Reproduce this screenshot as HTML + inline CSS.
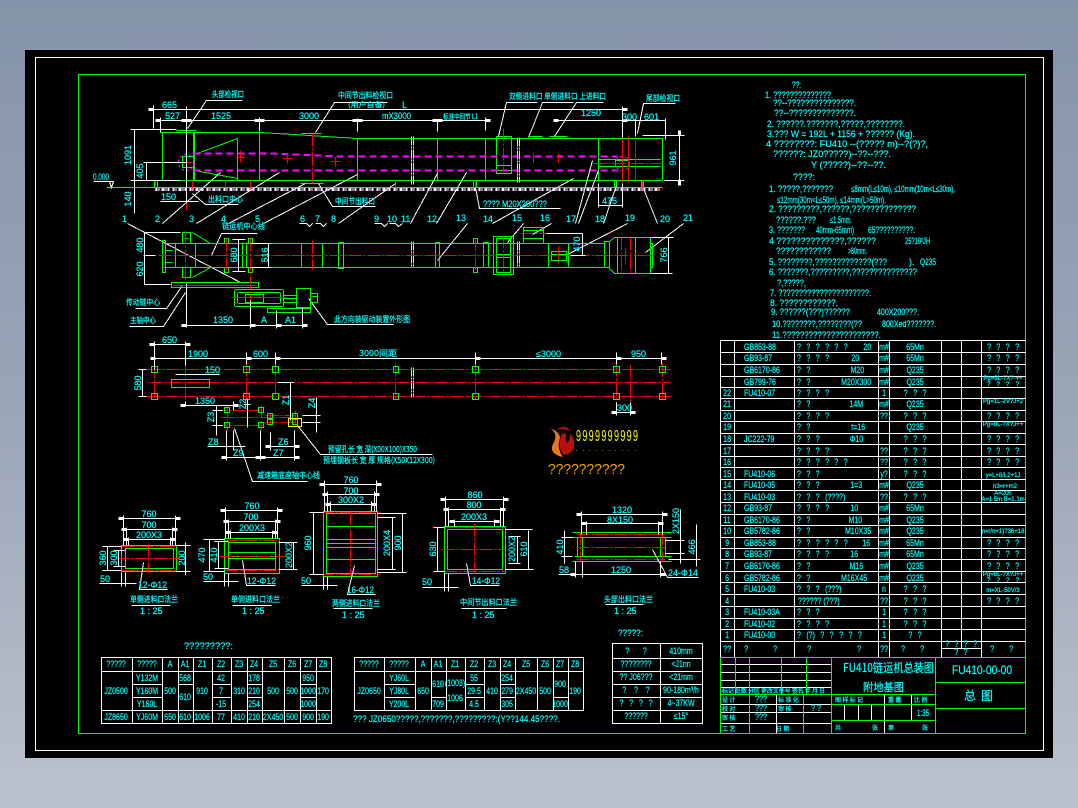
<!DOCTYPE html>
<html lang="zh"><head><meta charset="utf-8"><title>FU410</title>
<style>
html,body{margin:0;padding:0;width:1078px;height:808px;overflow:hidden;background:linear-gradient(180deg,#8593aa 0%,#9aa5b7 50%,#bcc2cd 100%)}
svg{position:absolute;left:0;top:0;display:block}
.w{stroke:#fff;fill:none}.g{stroke:#0f0;fill:none}.r{stroke:#f00;fill:none;stroke-dasharray:13 2 2 2}.rs{stroke:#f00;fill:none}
.m{stroke:#f0f;fill:none;stroke-width:2;stroke-dasharray:7 4}.y{stroke:#ff0;fill:none;stroke-dasharray:9 1 2 1}
text{font-family:"Liberation Sans","Noto Sans CJK SC",sans-serif;font-size:9px;fill:#0ff;stroke:#0ff;stroke-width:.2}
.s{font-size:7.5px}.xs{font-size:6px}.q{word-spacing:4.5px}
.z{font-family:"Noto Sans CJK SC","Liberation Sans",sans-serif;font-size:8px}
.nl>text{transform-box:fill-box;transform-origin:left center;transform:scaleX(.78)}
.nc>text{transform-box:fill-box;transform-origin:center;transform:scaleX(.78)}
.nr>text{transform-box:fill-box;transform-origin:right center;transform:scaleX(.78)}
.nc>text.xs{transform:none}
.k{stroke:none}
</style></head><body>
<svg width="1078" height="808" viewBox="0 0 1078 808" xmlns="http://www.w3.org/2000/svg">
<defs><marker id="t" viewBox="0 0 5 3" refX="0" refY="1.5" markerUnits="userSpaceOnUse" markerWidth="5" markerHeight="3" orient="auto-start-reverse"><rect width="5" height="3" fill="#fff"/></marker></defs>
<rect x="25" y="50" width="1028" height="708" fill="#000"/>
<g shape-rendering="crispEdges" transform="translate(.5 .5)">
<rect class="w" x="35" y="57" width="1008" height="693"/>
<rect class="g" x="78" y="74" width="947" height="659"/>

<!-- elevation -->
<path class="g" d="M106 187H662M160 180H662M160 132H260L357 138H662M162 132V180M193 132V180M194 132V180M237 138V180M259 132V180M357 138V180M437 138V180M485 138V180M598 138V180M662 138V180M194 154L237 138M194 170L237 178M176 130H196M301 133H321M300 183H323M528 136H542M549 136H567M496 136H511V173H496ZM496 165H511M496 170H511M598 159H660M598 166H660M154 180V187M157 180V187M473 180V187M476 180V187M614 180V187M616 180V187M641 180V187M643 180V187M182 156H193V167H182ZM615 160H628V166H615Z"/>
<path class="m" d="M193 153H270L340 156H617M193 170H617"/>
<circle class="m" style="stroke-width:1;stroke-dasharray:3 2" cx="186" cy="162" r="8"/>
<circle class="m" style="stroke-width:1;stroke-dasharray:3 2" cx="622" cy="163" r="7"/>
<path class="rs" d="M186 158V172M180 162H192M240 150V162M235 157H245M287 153V163M282 158H292M335 156V166M330 161H340M533 153V162M558 153V162M622 138V182M628 136V182M635 140V182M155 180V190M192 180V190M225 180V190M250 180V190M395 180V190M475 180V190M642 180V190"/>
<path class="r" d="M312 133V183M503 128V170M186 165V210M593 163H665"/>
<path class="y" d="M411 136V185M413 136V185M517 137V182M519 137V182M411 241V267M413 241V267M517 241V267M519 241V267M411 367V397M413 367V397"/>
<path d="M155 189H660" stroke="#fff" stroke-width="3" stroke-dasharray="2 1 1 2 3 1 1 1 2 3" fill="none"/>

<!-- elevation dims -->
<path class="w" marker-start="url(#t)" marker-end="url(#t)" d="M153 109H622"/>
<path class="w" marker-start="url(#t)" marker-end="url(#t)" d="M160 120H186"/>
<path class="w" marker-start="url(#t)" marker-end="url(#t)" d="M186 120H259"/>
<path class="w" marker-start="url(#t)" marker-end="url(#t)" d="M259 120H357"/>
<path class="w" marker-start="url(#t)" marker-end="url(#t)" d="M357 120H437"/>
<path class="w" marker-start="url(#t)" marker-end="url(#t)" d="M437 120H485"/>
<path class="w" marker-start="url(#t)" marker-end="url(#t)" d="M558 120H622"/>
<path class="w" d="M622 120H665M153 105V128M186 106V202M160 117V132M259 117V131M357 118V131M437 120V131M485 117V130M622 106V137M622 183V207M635 118V136M665 118V139M642 135H684M664 180H684M130 129H176M130 180H180M143 162H185M134 129V213M146 162V180M93 181H113M109 181L111 187L113 181M598 183V207M598 205H622M160 201H198M238 204H205L192 193M187 128L206 100H242M315 132L334 102H387M318 183L332 206H375M127 223L240 282M162 223L220 172M196 223L279 172M228 223L305 183M263 223L357 174M299 223H306L309 226L312 223M315 223H320L323 226L326 223M338 223L395 183M374 223H381L384 226L387 223M389 223H395L398 226L402 223M410 223L437 173M436 223L466 172M467 223L437 260M492 223L573 178M523 223L507 242M551 223L532 234M575 223L592 160M578 223L598 170M603 223L616 185M627 223L567 254M657 223L643 188M683 223L645 252M498 136L506 102H537M528 137L542 102H573M554 136L576 102H603M637 133L643 103H675M475 187L479 208H560M211 255L221 233H257M135 308H166L182 285M129 326H163L185 292M308 298L327 324H393"/>
<path class="w" marker-start="url(#t)" marker-end="url(#t)" d="M679 135V180"/>

<!-- plan -->
<path class="g" d="M164 243H605M164 267H605M162 240H165V272H162ZM165 250H172M165 262H172M175 243V267M195 243V267M242 242V267M246 242V267M301 243V267M322 243V267M338 242H343V268H338ZM435 242H439V267H435ZM483 242H488V267H483ZM182 232H190V243H182ZM182 267H190V277H182ZM184 238H188M192 232L210 243M192 277L210 267M171 282H258V287H171ZM224 238H228V243H224ZM224 267H228V272H224ZM248 238H252V243H248ZM248 267H252V272H248ZM473 238H477V243H473ZM473 267H477V272H473ZM493 236H513V274H493ZM496 238H510V272H496ZM496 254H510M496 257H510M523 227H543V243H523ZM523 230H543M523 238H543M548 243H568V267H548ZM551 251H566V260H551ZM551 254H566M604 241H609V267H604ZM609 241L614 237H650V273H614L609 268M617 237V273M635 237V273M650 243H652V267H650"/>
<rect class="g" x="234" y="289" width="49" height="17" rx="2"/><rect class="g" x="237" y="292" width="43" height="11" rx="2"/><rect class="g" x="245" y="294" width="18" height="8"/>
<path class="g" d="M283 295H297M283 298H297M283 302H297M267 308H310V312H267ZM296 288H310V307H296ZM310 293H317V302H310ZM312 296H317"/>
<path class="r" d="M158 255H652M185 230V280M226 238V272M250 238V300M312 240V269M475 238V272M503 235V276M558 246V264M621 237V273M630 237V273M625 247V265M520 233H546"/>
<path class="rs" d="M173 285H256M232 297H285"/>
<path class="w" d="M144 232V284M144 232H180M143 255H155M144 284H170M250 243H270M250 267H270M238 239V271M232 239H245M232 271H245M268 243V267M186 283V327M250 300V328M276 310V328M302 307V328M546 233H582M570 255H585M582 233V255M650 237H673M650 273H672M668 237V273"/>
<path class="w" marker-start="url(#t)" marker-end="url(#t)" d="M186 325H250"/><path class="w" marker-end="url(#t)" d="M250 325H276"/><path class="w" marker-end="url(#t)" d="M276 325H302"/>

<!-- foundation -->
<path class="r" d="M147 369H670M149 382H670M146 396H671M154 365V400M185 363V403M246 363V400M275 363V400M395 363V400M475 363V400M616 363V402M630 365V402M662 363V400M214 410H262M214 425H262M221 417H290M265 415H295M265 422H295M227 405V430M261 405V430M270 412V426M295 410V430"/>
<path class="g" d="M151 366h6v6h-6zM151 393h6v6h-6zM243 366h6v6h-6zM243 393h6v6h-6zM272 366h6v6h-6zM272 393h6v6h-6zM393 366h5v6h-5zM393 393h5v6h-5zM472 366h6v6h-6zM472 393h6v6h-6zM613 366h6v6h-6zM613 393h6v6h-6zM659 366h6v6h-6zM659 393h6v6h-6zM171 379H209V387H171ZM224 407h5v5h-5zM224 422h5v5h-5zM258 407h5v5h-5zM258 422h5v5h-5zM267 413h5v5h-5zM267 419h5v5h-5zM292 413h5v5h-5zM292 419h5v5h-5z"/>
<rect x="288" y="418" width="13" height="8" fill="none" stroke="#ff0"/>
<path class="w" d="M154 341V369M185 341V365M175 374H219M142 369V396M138 369H146M138 396H146M185 401V406M233 401V410M216 405V435M212 410H222M212 425H222M247 398V427M243 404H250M290 382V420M277 382H293M316 397V432M302 415H320M302 422H320M207 446H245M226 430V460M233 430V450M260 430V460M270 432V450M294 430V460M616 402V415M630 402V415M246 352V364M275 352V364M475 352V364M616 352V364M661 352V364M297 425L320 454H432M234 428L252 481H307"/>
<path class="w" marker-start="url(#t)" marker-end="url(#t)" d="M155 358H246"/><path class="w" marker-end="url(#t)" d="M246 358H275"/><path class="w" marker-end="url(#t)" d="M275 358H475"/><path class="w" marker-end="url(#t)" d="M475 358H616"/><path class="w" marker-end="url(#t)" d="M616 358H661"/>
<path class="w" marker-start="url(#t)" marker-end="url(#t)" d="M154 344H185"/><path class="w" marker-start="url(#t)" marker-end="url(#t)" d="M185 405H233"/><path class="w" marker-start="url(#t)" marker-end="url(#t)" d="M226 457H260"/><path class="w" marker-start="url(#t)" marker-end="url(#t)" d="M260 457H294"/><path class="w" marker-start="url(#t)" marker-end="url(#t)" d="M270 446H294"/><path class="w" marker-start="url(#t)" marker-end="url(#t)" d="M616 412H630"/>

<!-- flange 1 -->
<path class="g" d="M121 545H176V571H121ZM125 548H173V568H125Z"/><path class="r" d="M116 558H178M148 543V572M121 546H176M121 570H176"/>
<path class="w" d="M123 515V545M175 515V545M126 527V545M172 527V545M128 537V545M170 537V545M107 546V570M102 546H121M102 570H121M118 550V566M113 550H125M113 566H125M185 542V575M176 545H190M176 571H190M99 583H136M121 572V586M125 572V586M143 562L139 589H167M131 605H170"/>
<path class="w" marker-start="url(#t)" marker-end="url(#t)" d="M123 518H175"/><path class="w" marker-start="url(#t)" marker-end="url(#t)" d="M126 529H172"/><path class="w" marker-start="url(#t)" marker-end="url(#t)" d="M128 539H170"/>
<!-- flange 2 -->
<path class="g" d="M224 538H279V573H224ZM228 542H275V569H228ZM228 552H275M228 556H275M228 558H275"/><path class="r" d="M219 556H284M225 540H279M225 570H279"/>
<path class="w" d="M225 507V538M277 507V538M228 519V538M275 519V538M230 530V538M272 530V538M209 539V571M203 539H224M203 571H224M218 541V568M214 541H228M214 568H228M293 542V569M278 542H297M278 569H297M203 581H238M224 573V586M228 573V586M242 560L246 585H275M232 605H271"/>
<path class="w" marker-start="url(#t)" marker-end="url(#t)" d="M225 510H277"/><path class="w" marker-start="url(#t)" marker-end="url(#t)" d="M228 521H275"/><path class="w" marker-start="url(#t)" marker-end="url(#t)" d="M230 532H272"/>
<!-- flange 3 -->
<path class="g" d="M323 511H377V576H323ZM326 513H375V573H326ZM326 526H375M326 539H375M326 543H375M326 547H375M326 559H375"/><path class="r" d="M350 511V576M320 512H380M320 574H380"/>
<path class="w" d="M324 480V511M376 480V511M327 491V511M374 491V511M330 501V511M371 501V511M313 512V574M309 512H323M309 574H323M392 517V569M377 517H395M377 569H395M402 513V572M377 513H406M377 572H406M301 585H337M323 576V589M327 576V589M354 565L347 594H375M333 608H372"/>
<path class="w" marker-start="url(#t)" marker-end="url(#t)" d="M324 484H376"/><path class="w" marker-start="url(#t)" marker-end="url(#t)" d="M327 494H374"/><path class="w" marker-start="url(#t)" marker-end="url(#t)" d="M330 504H371"/>
<!-- flange 4 -->
<path class="g" d="M444 526H505V573H444ZM447 529H502V569H447Z"/><path class="r" d="M441 549H505M474 523V573M444 527H505M444 571H505"/>
<path class="w" d="M445 496V526M503 496V526M448 507V526M500 507V526M454 519V526M494 519V526M437 527V571M433 527H444M433 571H444M517 536V563M508 536H520M508 563H520M528 530V569M505 529H532M505 569H533M422 587H458M444 573V591M448 573V591M466 563L470 585H499M461 608H506"/>
<path class="w" marker-start="url(#t)" marker-end="url(#t)" d="M445 499H503"/><path class="w" marker-start="url(#t)" marker-end="url(#t)" d="M448 509H500"/><path class="w" marker-start="url(#t)" marker-end="url(#t)" d="M454 521H494"/>
<!-- flange 5 -->
<path class="g" d="M572 532H671M572 537H671M574 556H671M572 561H671M577 537V556M582 537V556M660 537V556M665 537V556"/><path class="r" d="M576 547H667M576 534H667M576 559H667M580 532V561M662 532V561"/>
<path class="w" d="M581 511V534M662 511V534M586 521V534M658 521V534M564 530V563M561 537H572M561 556H572M680 509V563M665 540H684M665 553H684M696 524V566M668 559H700M558 574H575M575 561V577M582 561V577M660 561V577M652 549L667 577H698M605 604H643"/>
<path class="w" marker-start="url(#t)" marker-end="url(#t)" d="M581 514H662"/><path class="w" marker-start="url(#t)" marker-end="url(#t)" d="M586 523H658"/><path class="w" marker-start="url(#t)" marker-end="url(#t)" d="M575 574H660"/>

<!-- tables -->
<path class="w" d="M101 657H331V723H101ZM101 671H331M101 710H331M132 657V723M162 657V723M178 657V723M193 657V723M212 657V723M231 657V723M247 657V723M262 657V723M284 657V723M300 657V723M316 657V723M132 684H162M132 697H162M178 684H193M212 684H231M212 697H231M247 684H262M247 697H262M300 684H316M300 697H316"/>
<path class="w" d="M354 657H583V710H354ZM354 671H583M384 657V710M415 657V710M431 657V710M446 657V710M465 657V710M484 657V710M500 657V710M515 657V710M537 657V710M553 657V710M568 657V710M384 684H415M384 697H415M431 697H446M465 684H484M465 697H484M500 684H515M500 697H515M553 697H568"/>
<path class="w" d="M612 643H702V723H612ZM660 643V723M612 658H702M612 671H702M612 684H702M612 697H702M612 710H702"/>

<!-- BOM -->
<path class="w" d="M720 340H1025M720 352H1025M720 364H1025M720 376H1025M720 387H1025M720 398H1025M720 410H1025M720 421H1025M720 433H1025M720 444H1025M720 456H1025M720 467H1025M720 479H1025M720 490H1025M720 502H1025M720 514H1025M720 525H1025M720 537H1025M720 548H1025M720 559H1025M720 571H1025M720 582H1025M720 594H1025M720 606H1025M720 618H1025M720 629H1025M720 641H1025M720 340V657M734 340V657M794 340V657M878 340V657M889 340V657M941 340V657M961 340V648M981 340V657M941 648H981"/>
<!-- title block -->
<path class="w" d="M720 664H831M720 672H831M720 680H831M720 687H831M720 704H749M720 712H749M720 723H749M749 704H803M749 712H803M749 723H803M844 704V720M858 704V720M871 704V720M884 694V733M911 694V720M776 694V733M803 704H831M803 712H831M803 723H831"/>
<path class="g" d="M720 657H1025M720 694H935M720 657V733M735 657V694M749 657V733M781 657V694M806 657V694M803 694V733M831 657V733M935 657V733M831 704H935M831 720H935M935 682H1025M935 708H1025"/>
</g>

<!-- logo -->
<path fill="#e8791a" d="M550 428C556 432 557 437 553 444C550 450 553 455 563 457C558 450 558 444 560 438C560 433 555 430 550 428Z"/>
<path fill="#b81010" d="M566 434L566 442C568 444 570 440 570 434C573 436 575 442 574 447C572 453 566 456 563 454C559 450 559 442 561 436C562 433 564 433 566 434Z"/>
<path fill="#a01010" d="M557 430C560 426 566 426 569 429L571 431L566 430C562 429 560 429 557 430Z"/>
<text class="k" transform="translate(576 441) scale(1 1.7)" style="font-size:9px;fill:#ff0" textLength="62" lengthAdjust="spacing">9999999999</text>
<text class="k" x="576" y="451" style="font-size:6px;fill:#ff0" textLength="60" lengthAdjust="spacing">..........</text>
<text class="k" x="548" y="474" style="font-size:15px;fill:#f5a500" textLength="77" lengthAdjust="spacingAndGlyphs">??????????</text>

<!-- elevation text -->
<g>
<text class="z" x="212" y="97" textLength="32" lengthAdjust="spacingAndGlyphs">头部检视口</text>
<text class="z" x="338" y="98" textLength="55" lengthAdjust="spacingAndGlyphs">中间节出料检视口</text><text class="z" x="348" y="107" style="font-size:7px" textLength="37" lengthAdjust="spacingAndGlyphs">(用户自备)</text>
<text x="162" y="108">665</text><text x="165" y="119">527</text><text x="211" y="119">1525</text><text x="299" y="119">3000</text><text x="382" y="119" textLength="29" lengthAdjust="spacingAndGlyphs">mX3000</text><text x="402" y="108">L</text>
<text class="z" x="443" y="119" style="font-size:7px" textLength="35" lengthAdjust="spacingAndGlyphs">标准中间节 L1</text>
<text class="z" x="509" y="99" style="font-size:8px" textLength="97" lengthAdjust="spacingAndGlyphs">双侧进料口 单侧进料口 上进料口</text>
<text class="z" x="646" y="101" textLength="34" lengthAdjust="spacingAndGlyphs">尾部检视口</text>
<text x="581" y="116">1250</text><text x="622" y="120">300</text><text x="644" y="120">601</text><text x="602" y="204">475</text>
<text x="93" y="180" textLength="16" lengthAdjust="spacingAndGlyphs">0.000</text>
<text text-anchor="middle" transform="translate(131 155) rotate(-90)">1091</text>
<text text-anchor="middle" transform="translate(143 171) rotate(-90)">405</text>
<text text-anchor="middle" transform="translate(676 158) rotate(-90)">961</text>
<text x="161" y="200">150</text><text text-anchor="middle" transform="translate(131 199) rotate(-90)">140</text>
<text class="z" x="208" y="202" textLength="35" lengthAdjust="spacingAndGlyphs">出料口中心</text>
<text class="z" x="335" y="204" textLength="40" lengthAdjust="spacingAndGlyphs">中间节出料口</text>
<text x="483" y="207" textLength="64" lengthAdjust="spacingAndGlyphs">???? M20X200???</text>
<text x="122" y="222">1</text><text x="155" y="222">2</text><text x="189" y="222">3</text><text x="221" y="222">4</text><text x="255" y="222">5</text><text x="300" y="222">6</text><text x="315" y="222">7</text><text x="331" y="222">8</text><text x="374" y="222">9</text><text x="387" y="222">10</text><text x="401" y="222">11</text><text x="427" y="222">12</text><text x="456" y="221">13</text><text x="483" y="222">14</text><text x="512" y="221">15</text><text x="540" y="221">16</text><text x="566" y="222">17</text><text x="595" y="222">18</text><text x="625" y="221">19</text><text x="660" y="222">20</text><text x="683" y="221">21</text>
<text class="z" x="222" y="229" textLength="43" lengthAdjust="spacingAndGlyphs">链运机中心线</text>
<text text-anchor="middle" transform="translate(143 245) rotate(-90)">480</text><text text-anchor="middle" transform="translate(143 269) rotate(-90)">620</text>
<text text-anchor="middle" transform="translate(237 255) rotate(-90)">680</text><text text-anchor="middle" transform="translate(268 255) rotate(-90)">516</text>
<text text-anchor="middle" transform="translate(580 244) rotate(-90)">470</text><text text-anchor="middle" transform="translate(667 255) rotate(-90)">766</text>
<text x="213" y="323">1350</text><text x="261" y="323">A</text><text x="285" y="323">A1</text>
<text class="z" x="126" y="305" textLength="34" lengthAdjust="spacingAndGlyphs">传动链中心</text><text class="z" x="130" y="323" textLength="26" lengthAdjust="spacingAndGlyphs">主轴中心</text>
<text class="z" x="334" y="322" textLength="76" lengthAdjust="spacingAndGlyphs">此方向装驱动装置外形图</text>
<!-- foundation text -->
<text x="162" y="343">650</text><text x="188" y="357">1900</text><text x="253" y="357">600</text><text class="z" x="359" y="356" textLength="38" lengthAdjust="spacingAndGlyphs">3000间距</text><text x="536" y="357">≤3000</text><text x="631" y="357">950</text><text x="617" y="411">300</text>
<text text-anchor="middle" transform="translate(141 383) rotate(-90)">580</text>
<text x="205" y="373">150</text><text x="195" y="404">1350</text>
<text text-anchor="middle" transform="translate(214 417) rotate(-90)">Z3</text><text text-anchor="middle" transform="translate(246 404) rotate(-90)">Z2</text><text text-anchor="middle" transform="translate(289 400) rotate(-90)">Z1</text><text text-anchor="middle" transform="translate(315 403) rotate(-90)">Z4</text>
<text x="208" y="445">Z8</text><text x="233" y="456">Z9</text><text x="278" y="445">Z6</text><text x="273" y="456">Z7</text>
<text class="z" x="328" y="452" textLength="89" lengthAdjust="spacingAndGlyphs">预留孔长 宽 深(X00X100)X350</text>
<text class="z" x="323" y="463" textLength="112" lengthAdjust="spacingAndGlyphs">预埋钢板长 宽 厚 规格(X50X12X300)</text>
<text class="z" x="257" y="478" textLength="63" lengthAdjust="spacingAndGlyphs">减速箱底座轴中心线</text>
<!-- flange text -->
<text text-anchor="middle" x="149" y="517">760</text><text text-anchor="middle" x="149" y="528">700</text><text text-anchor="middle" x="149" y="538">200X3</text>
<text text-anchor="middle" transform="translate(106 558) rotate(-90)">360</text><text text-anchor="middle" transform="translate(117 558) rotate(-90)">300</text><text text-anchor="middle" transform="translate(185 558) rotate(-90)">200</text>
<text x="100" y="582">50</text><text x="138" y="588" textLength="29" lengthAdjust="spacingAndGlyphs">12-Φ12</text><text class="z" x="130" y="602" textLength="48" lengthAdjust="spacingAndGlyphs">单侧进料口法兰</text><text x="140" y="614">1 : 25</text>
<text text-anchor="middle" x="252" y="509">760</text><text text-anchor="middle" x="251" y="520">700</text><text text-anchor="middle" x="252" y="531">200X3</text>
<text text-anchor="middle" transform="translate(205 555) rotate(-90)">470</text><text text-anchor="middle" transform="translate(217 555) rotate(-90)">410</text><text text-anchor="middle" transform="translate(292 555) rotate(-90)">200X2</text>
<text x="203" y="580">50</text><text x="247" y="584" textLength="29" lengthAdjust="spacingAndGlyphs">12-Φ12</text><text class="z" x="231" y="602" textLength="49" lengthAdjust="spacingAndGlyphs">单侧进料口法兰</text><text x="242" y="614">1 : 25</text>
<text text-anchor="middle" x="351" y="483">760</text><text text-anchor="middle" x="351" y="494">700</text><text text-anchor="middle" x="351" y="503">300X2</text>
<text text-anchor="middle" transform="translate(311 543) rotate(-90)">960</text><text text-anchor="middle" transform="translate(390 543) rotate(-90)">200X4</text><text text-anchor="middle" transform="translate(401 543) rotate(-90)">900</text>
<text x="301" y="584">50</text><text x="347" y="593" textLength="27" lengthAdjust="spacingAndGlyphs">16-Φ12</text><text class="z" x="332" y="606" textLength="48" lengthAdjust="spacingAndGlyphs">两侧进料口法兰</text><text x="342" y="618">1 : 25</text>
<text text-anchor="middle" x="475" y="498">860</text><text text-anchor="middle" x="474" y="508">800</text><text text-anchor="middle" x="474" y="520">200X3</text>
<text text-anchor="middle" transform="translate(436 549) rotate(-90)">630</text><text text-anchor="middle" transform="translate(515 549) rotate(-90)">200X2</text><text text-anchor="middle" transform="translate(527 549) rotate(-90)">610</text>
<text x="422" y="585">50</text><text x="472" y="584" textLength="28" lengthAdjust="spacingAndGlyphs">14-Φ12</text><text class="z" x="460" y="605" textLength="57" lengthAdjust="spacingAndGlyphs">中间节出料口法兰</text><text x="472" y="618">1 : 25</text>
<text text-anchor="middle" x="622" y="513">1320</text><text text-anchor="middle" x="620" y="523">8X150</text>
<text text-anchor="middle" transform="translate(563 547) rotate(-90)">410</text><text text-anchor="middle" transform="translate(679 521) rotate(-90)">2X150</text><text text-anchor="middle" transform="translate(695 547) rotate(-90)">466</text>
<text x="559" y="573">58</text><text text-anchor="middle" x="621" y="573">1250</text><text x="668" y="576" textLength="30" lengthAdjust="spacingAndGlyphs">24-Φ14</text><text class="z" x="604" y="602" textLength="49" lengthAdjust="spacingAndGlyphs">头部出料口法兰</text><text x="614" y="614">1 : 25</text>
</g>

<!-- table text -->
<text x="184" y="649" textLength="49" lengthAdjust="spacingAndGlyphs">?????????:</text><text x="618" y="636" textLength="25" lengthAdjust="spacingAndGlyphs">?????:</text>
<g class="nc" text-anchor="middle">
<text x="116" y="667">?????</text><text x="147" y="667">?????</text><text x="170" y="667">A</text><text x="185" y="667">A1</text><text x="202" y="667">Z1</text><text x="221" y="667">Z2</text><text x="239" y="667">Z3</text><text x="254" y="667">Z4</text><text x="273" y="667">Z5</text><text x="292" y="667">Z6</text><text x="308" y="667">Z7</text><text x="323" y="667">Z8</text>
<text x="116" y="694">JZ0500</text><text x="147" y="681">Y132M</text><text x="147" y="694">Y160M</text><text x="147" y="707">Y160L</text><text x="170" y="694">500</text><text x="185" y="681">568</text><text x="185" y="700">610</text><text x="202" y="694">910</text><text x="221" y="681">42</text><text x="221" y="694">7</text><text x="221" y="707">-15</text><text x="239" y="694">310</text><text x="254" y="681">178</text><text x="254" y="694">210</text><text x="254" y="707">254</text><text x="273" y="694">500</text><text x="292" y="694">500</text><text x="308" y="681">950</text><text x="308" y="694">1000</text><text x="308" y="707">1000</text><text x="323" y="694">170</text>
<text x="116" y="720">JZ8650</text><text x="147" y="720">YJ60M</text><text x="170" y="720">650</text><text x="185" y="720">610</text><text x="202" y="720">1006</text><text x="221" y="720">77</text><text x="239" y="720">410</text><text x="254" y="720">210</text><text x="273" y="720">2X450</text><text x="292" y="720">500</text><text x="308" y="720">900</text><text x="323" y="720">190</text>
<text x="369" y="667">?????</text><text x="399" y="667">?????</text><text x="423" y="667">A</text><text x="438" y="667">A1</text><text x="455" y="667">Z1</text><text x="474" y="667">Z2</text><text x="492" y="667">Z3</text><text x="507" y="667">Z4</text><text x="526" y="667">Z5</text><text x="545" y="667">Z6</text><text x="560" y="667">Z7</text><text x="575" y="667">Z8</text>
<text x="369" y="694">JZ0650</text><text x="399" y="681">YJ60L</text><text x="399" y="694">YJ80L</text><text x="399" y="707">Y200L</text><text x="423" y="694">650</text><text x="438" y="687">610</text><text x="438" y="707">709</text><text x="455" y="686">(1003)</text><text x="455" y="701">1006</text><text x="474" y="681">55</text><text x="474" y="694">29.5</text><text x="474" y="707">4.5</text><text x="492" y="694">410</text><text x="507" y="681">254</text><text x="507" y="694">279</text><text x="507" y="707">305</text><text x="526" y="694">2X450</text><text x="545" y="694">500</text><text x="560" y="687">900</text><text x="560" y="707">1000</text><text x="575" y="694">190</text>
<text x="636" y="654">?&#160;&#160;&#160;&#160;&#160;&#160;&#160;?</text><text x="681" y="654">410mm</text>
<text x="636" y="667">????????</text><text x="681" y="667">&lt;J1nn</text>
<text x="636" y="680">?? J06???</text><text x="681" y="680">&lt;21mm</text>
<text x="636" y="693">?&#160;&#160;&#160;&#160;?&#160;&#160;&#160;&#160;?</text><text x="681" y="693">90-180m³/h</text>
<text x="636" y="706">?&#160;&#160;&#160;?&#160;&#160;&#160;?&#160;&#160;&#160;?</text><text x="681" y="706">4~37KW</text>
<text x="636" y="719">??????</text><text x="681" y="719">≤15°</text>
</g>
<text x="353" y="722" textLength="207" lengthAdjust="spacingAndGlyphs">??? JZ0650?????,???????,?????????:(Y??144.45????.</text>

<!-- notes -->
<g>
<text x="792" y="88" textLength="9" lengthAdjust="spacingAndGlyphs">??:</text>
<text x="765" y="98" textLength="68" lengthAdjust="spacingAndGlyphs">1. ??????????????.</text>
<text x="773" y="106" textLength="83" lengthAdjust="spacingAndGlyphs">??--???????????????.</text>
<text x="774" y="116" textLength="82" lengthAdjust="spacingAndGlyphs">??--??????????????.</text>
<text x="767" y="127" textLength="138" lengthAdjust="spacingAndGlyphs">2. ??????.???????,?????,????????.</text>
<text x="767" y="137" textLength="148" lengthAdjust="spacingAndGlyphs">3.???  W = 192L + 1156 + ??????  (Kg).</text>
<text x="766" y="147" textLength="162" lengthAdjust="spacingAndGlyphs">4 ????????:  FU410 --(????? m)--?(?)?,</text>
<text x="773" y="157" textLength="118" lengthAdjust="spacingAndGlyphs">??????:  JZ0?????)--??--???.</text>
<text x="811" y="168" textLength="75" lengthAdjust="spacingAndGlyphs">Y (?????)--??--??.</text>
<text x="793" y="180" textLength="22" lengthAdjust="spacingAndGlyphs">????:</text>
<text x="769" y="192" textLength="64" lengthAdjust="spacingAndGlyphs">1. ?????,???????</text><text x="851" y="192" textLength="104" lengthAdjust="spacingAndGlyphs">≤8mm(L≤10m), ≤10mm(10m&lt;L≤30m),</text>
<text x="777" y="203" textLength="109" lengthAdjust="spacingAndGlyphs">≤12mm(30m&lt;L≤50m), ≤14mm(L&gt;50m).</text>
<text x="769" y="212" textLength="147" lengthAdjust="spacingAndGlyphs">2. ?????????,??????,??????????????</text>
<text x="776" y="223" textLength="40" lengthAdjust="spacingAndGlyphs">??????.???</text><text x="830" y="223" textLength="22" lengthAdjust="spacingAndGlyphs">≤1.5mm.</text>
<text x="769" y="233" textLength="36" lengthAdjust="spacingAndGlyphs">3. ???????</text><text x="816" y="233" textLength="38" lengthAdjust="spacingAndGlyphs">40mm-65mm)</text><text x="868" y="233" textLength="47" lengthAdjust="spacingAndGlyphs">65??????????.</text>
<text x="769" y="244" textLength="107" lengthAdjust="spacingAndGlyphs">4 ??????????????,??????</text><text x="905" y="244" textLength="25" lengthAdjust="spacingAndGlyphs">25?10²JH</text>
<text x="776" y="254" textLength="55" lengthAdjust="spacingAndGlyphs">????????????</text><text x="848" y="254" textLength="19" lengthAdjust="spacingAndGlyphs">&gt;80mm.</text>
<text x="769" y="265" textLength="118" lengthAdjust="spacingAndGlyphs">5. ????????,?????????????(???</text><text x="909" y="265">).</text><text x="920" y="265" textLength="16" lengthAdjust="spacingAndGlyphs">Q235</text>
<text x="769" y="275" textLength="148" lengthAdjust="spacingAndGlyphs">6. ???????,?????????,???????????????</text>
<text x="777" y="286" textLength="29" lengthAdjust="spacingAndGlyphs">?,?????,</text>
<text x="770" y="296" textLength="101" lengthAdjust="spacingAndGlyphs">7. ??????????????????????.</text>
<text x="770" y="306" textLength="68" lengthAdjust="spacingAndGlyphs">8. ????????????.</text>
<text x="771" y="315" textLength="79" lengthAdjust="spacingAndGlyphs">9. ??????(???)??????</text><text x="877" y="315" textLength="42" lengthAdjust="spacingAndGlyphs">400X200???.</text>
<text x="772" y="327" textLength="90" lengthAdjust="spacingAndGlyphs">10.????????,????????(??</text><text x="882" y="327" textLength="54" lengthAdjust="spacingAndGlyphs">800Xed???????.</text>
<text x="772" y="338" textLength="109" lengthAdjust="spacingAndGlyphs">11.??????????????????????.</text>
</g>

<!-- BOM text -->
<g class="nl">
<text class="q" x="797" y="350">? ? ? ? ? ?</text><text class="q" x="797" y="361">? ? ? ?</text><text class="q" x="797" y="373">? ?</text><text class="q" x="797" y="385">? ?</text><text class="q" x="797" y="396">? ? ? ?</text><text class="q" x="797" y="407">? ?</text><text class="q" x="797" y="419">? ? ? ?</text><text class="q" x="797" y="430">? ?</text><text class="q" x="797" y="442">? ? ?</text><text class="q" x="797" y="454">? ? ? ?</text><text class="q" x="797" y="465">? ? ? ? ? ?</text><text class="q" x="797" y="477">? ? ?</text><text class="q" x="797" y="488">? ? ?</text><text class="q" x="797" y="500">? ? ? (????)</text><text class="q" x="797" y="511">? ? ? ?</text><text class="q" x="797" y="523">? ?</text><text class="q" x="797" y="534">? ?</text><text class="q" x="797" y="546">? ? ? ? ? ?</text><text class="q" x="797" y="557">? ? ? ?</text><text class="q" x="797" y="569">? ?</text><text class="q" x="797" y="581">? ?</text><text class="q" x="797" y="592">? ? ? (???)</text><text x="798" y="604">?????? (???)</text><text class="q" x="797" y="615">? ? ?</text><text class="q" x="797" y="627">? ? ? ?</text><text class="q" x="797" y="638">? (?) ? ? ? ? ?</text>
<text x="744" y="350">GB853-88</text><text x="744" y="361">GB93-87</text><text x="744" y="373">GB6170-86</text><text x="744" y="385">GB799-76</text><text x="744" y="396">FU410-07</text><text x="744" y="442">JC222-79</text><text x="744" y="477">FU410-06</text><text x="744" y="488">FU410-05</text><text x="744" y="500">FU410-03</text><text x="744" y="511">GB93-87</text><text x="744" y="523">GB6170-86</text><text x="744" y="534">GB5782-86</text><text x="744" y="546">GB853-88</text><text x="744" y="557">GB93-87</text><text x="744" y="569">GB6170-86</text><text x="744" y="581">GB5782-86</text><text x="744" y="592">FU410-03</text><text x="744" y="615">FU410-03A</text><text x="744" y="627">FU410-02</text><text x="744" y="638">FU410-00</text>
</g>
<g class="nc" text-anchor="middle">
<text x="727" y="396">22</text><text x="727" y="407">21</text><text x="727" y="419">20</text><text x="727" y="430">19</text><text x="727" y="442">18</text><text x="727" y="454">17</text><text x="727" y="465">16</text><text x="727" y="477">15</text><text x="727" y="488">14</text><text x="727" y="500">13</text><text x="727" y="511">12</text><text x="727" y="523">11</text><text x="727" y="534">10</text><text x="727" y="546">9</text><text x="727" y="557">8</text><text x="727" y="569">7</text><text x="727" y="581">6</text><text x="727" y="592">5</text><text x="727" y="604">4</text><text x="727" y="615">3</text><text x="727" y="627">2</text><text x="727" y="638">1</text><text x="727" y="652">??</text>
<text x="884" y="350">m#</text><text x="884" y="361">m#</text><text x="884" y="373">m#</text><text x="884" y="385">m#</text><text x="884" y="396">1</text><text x="884" y="407">m#</text><text x="884" y="419">??</text><text x="884" y="454">??</text><text x="884" y="465">??</text><text x="884" y="477">y?</text><text x="884" y="488">m#</text><text x="884" y="500">??</text><text x="884" y="511">m#</text><text x="884" y="523">m#</text><text x="884" y="534">m#</text><text x="884" y="546">m#</text><text x="884" y="557">m#</text><text x="884" y="569">m#</text><text x="884" y="581">m#</text><text x="884" y="592">n</text><text x="884" y="604">??</text><text x="884" y="615">1</text><text x="884" y="627">1</text><text x="884" y="638">1</text><text x="884" y="652">??</text>
<text x="915" y="350">65Mn</text><text x="915" y="361">65Mn</text><text x="915" y="373">Q235</text><text x="915" y="385">Q235</text><text class="q" x="915" y="396">? ? ?</text><text x="915" y="407">Q235</text><text class="q" x="915" y="419">? ? ?</text><text x="915" y="430">Q235</text><text class="q" x="915" y="442">? ? ?</text><text class="q" x="915" y="454">? ? ?</text><text class="q" x="915" y="465">? ? ?</text><text class="q" x="915" y="477">? ? ?</text><text x="915" y="488">Q235</text><text class="q" x="915" y="500">? ? ?</text><text x="915" y="511">65Mn</text><text x="915" y="523">Q235</text><text x="915" y="534">Q235</text><text x="915" y="546">65Mn</text><text x="915" y="557">65Mn</text><text x="915" y="569">Q235</text><text x="915" y="581">Q235</text><text class="q" x="915" y="592">? ? ?</text><text class="q" x="915" y="604">? ? ?</text><text class="q" x="915" y="615">? ? ?</text><text class="q" x="915" y="627">? ? ?</text><text class="q" x="915" y="638">? ?</text>
<text class="q" x="1003" y="350">? ? ? ?</text><text class="q" x="1003" y="361">? ? ? ?</text><text class="q" x="1003" y="373">? ? ? ?</text><text class="xs" x="1003" y="380">Pg=8L-?X?-++</text><text class="xs q" x="1003" y="386">? ? ? ?</text><text class="xs" x="1003" y="403">Pg=1L-2V?J+2</text><text class="q" x="1003" y="419">? ? ? ?</text><text class="xs" x="1003" y="426">Pg=8L-?X?J++</text><text class="q" x="1003" y="442">? ? ? ?</text><text class="q" x="1003" y="454">? ? ? ?</text><text class="q" x="1003" y="465">? ? ? ?</text><text class="xs" x="1003" y="477">y=L+8/L2+1J</text><text class="xs" x="1005" y="488">n3=r+m2</text><text class="xs" x="1003" y="495">A=20h</text><text class="xs" x="1003" y="501">A=1.5m B=1.1m</text><text class="xs" x="1003" y="533">n=r/n+1)?36+18</text><text class="q" x="1003" y="546">? ? ? ?</text><text class="q" x="1003" y="557">? ? ? ?</text><text class="q" x="1003" y="569">? ? ? ?</text><text class="xs" x="1003" y="576">Pg=8L-?X?J++</text><text class="xs q" x="1003" y="582">? ? ? ?</text><text class="xs" x="1003" y="592">m=XL-50V/3</text><text class="q" x="1003" y="604">? ? ? ?</text>
<text x="746" y="652">?</text><text x="775" y="652">?</text><text x="809" y="652">?</text><text x="859" y="652">?</text><text x="903" y="652">?</text><text x="922" y="652">?</text><text class="q" x="961" y="647">? ? ? ?</text><text class="q" x="961" y="655">? ?</text><text x="992" y="652">?</text><text x="1011" y="652">?</text>
</g>
<g class="nr" text-anchor="end">
<text x="871" y="350">20</text><text x="859" y="361">20</text><text x="864" y="373">M20</text><text x="871" y="385">M20X300</text><text x="863" y="407">14M</text><text x="865" y="430">t=16</text><text x="863" y="442">Φ10</text><text x="862" y="488">1=3</text><text x="858" y="511">10</text><text x="862" y="523">M10</text><text x="871" y="534">M10X35</text><text x="870" y="546">16</text><text x="858" y="557">16</text><text x="863" y="569">M16</text><text x="867" y="581">M16X45</text>
</g>

<!-- title block text -->
<g>
<text class="z" x="843" y="672" style="font-size:12px" textLength="91" lengthAdjust="spacingAndGlyphs">FU410链运机总装图</text>
<text class="z" x="863" y="691" style="font-size:11px" textLength="41" lengthAdjust="spacingAndGlyphs">附地基图</text>
<text x="952" y="674" style="font-size:12px" textLength="60" lengthAdjust="spacingAndGlyphs">FU410-00-00</text>
<text class="z" x="964" y="700" style="font-size:12px">总</text><text class="z" x="981" y="700" style="font-size:12px">图</text>
<text x="917" y="716" textLength="12" lengthAdjust="spacingAndGlyphs">1:35</text>
<text class="z" x="722" y="693" style="font-size:6px" textLength="103">标记 处数 分区 更改文件号 签名 年 月 日</text>
<text class="z" x="722" y="702" style="font-size:6px">设  计</text><text x="755" y="702" textLength="12" lengthAdjust="spacingAndGlyphs">???</text><text class="z" x="778" y="702" style="font-size:6px">标 准 化</text>
<text class="z" x="722" y="711" style="font-size:6px">校  对</text><text x="755" y="711" textLength="12" lengthAdjust="spacingAndGlyphs">???</text><text class="z" x="778" y="711" style="font-size:6px">审 核</text><text x="811" y="711" textLength="10" lengthAdjust="spacingAndGlyphs">? ?</text>
<text class="z" x="722" y="720" style="font-size:6px">审  核</text><text x="755" y="720" textLength="12" lengthAdjust="spacingAndGlyphs">???</text>
<text class="z" x="722" y="731" style="font-size:6px">工  艺</text><text class="z" x="776" y="731" style="font-size:6px">日 期</text>
<text class="z" x="835" y="702" style="font-size:6px">图 样 标 记</text><text class="z" x="888" y="702" style="font-size:6px">重 量</text><text class="z" x="914" y="702" style="font-size:6px">比 例</text>
<text class="z" x="835" y="730" style="font-size:6px">共</text><text class="z" x="872" y="730" style="font-size:6px">张</text><text class="z" x="888" y="730" style="font-size:6px">第</text><text class="z" x="922" y="730" style="font-size:6px">张</text>
</g>
</svg>
</body></html>
